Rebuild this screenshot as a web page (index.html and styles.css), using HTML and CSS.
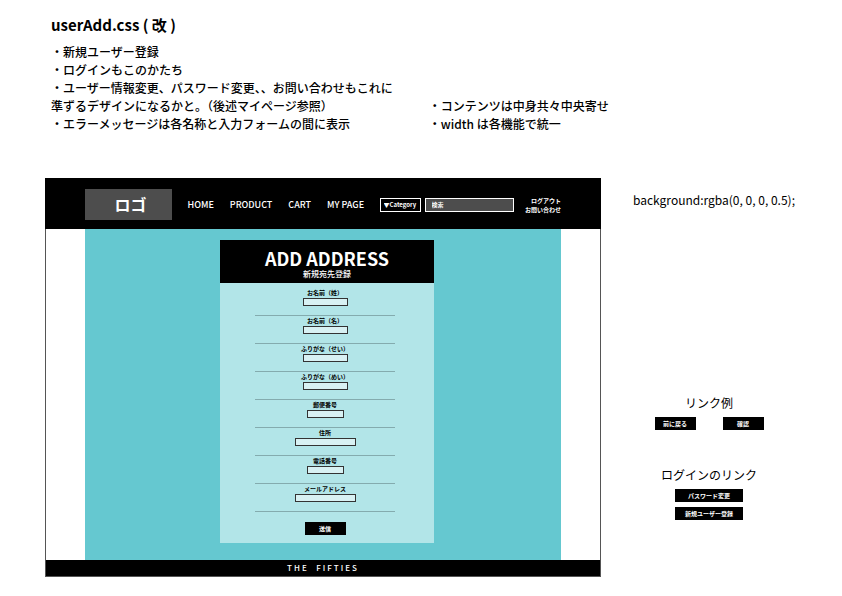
FILE: index.html
```html
<!DOCTYPE html>
<html lang="ja">
<head>
<meta charset="utf-8">
<title>userAdd.css</title>
<link rel="stylesheet" href="styles.css">
</head>
<body>
<section class="notes">
  <div class="notes-main">
    <h1>userAdd.css ( 改 )</h1>
    <p>・新規ユーザー登録<br>・ログインもこのかたち<br>・ユーザー情報変更、パスワード変更、、お問い合わせもこれに<br>準ずるデザインになるかと。（後述マイページ参照）<br>・エラーメッセージは各名称と入力フォームの間に表示</p>
  </div>
  <p>・コンテンツは中身共々中央寄せ<br>・width は各機能で統一</p>
</section>
<div class="board">
  <div class="frame">
    <header class="bar">
      <a class="logo" href="#">ロゴ</a>
      <nav class="nav">
        <a href="#">HOME</a>
        <a href="#">PRODUCT</a>
        <a href="#">CART</a>
        <a href="#">MY PAGE</a>
      </nav>
      <form class="search">
        <select aria-label="Category"><option>▼Category</option></select>
        <input type="search" aria-label="検索" placeholder="検索">
      </form>
      <div class="account">
        <a href="#">ログアウト</a>
        <a href="#">お問い合わせ</a>
      </div>
    </header>
    <main class="content">
      <form class="card">
        <div class="card-head">
          <h2>ADD ADDRESS</h2>
          <p>新規宛先登録</p>
        </div>
        <div class="fields">
          <div class="field"><label for="sei">お名前（姓）</label><input id="sei" type="text"></div>
          <div class="field"><label for="mei">お名前（名）</label><input id="mei" type="text"></div>
          <div class="field"><label for="ksei">ふりがな（せい）</label><input id="ksei" type="text"></div>
          <div class="field"><label for="kmei">ふりがな（めい）</label><input id="kmei" type="text"></div>
          <div class="field"><label for="zip">郵便番号</label><input class="short" id="zip" type="text"></div>
          <div class="field"><label for="addr">住所</label><input class="long" id="addr" type="text"></div>
          <div class="field"><label for="tel">電話番号</label><input class="short" id="tel" type="tel"></div>
          <div class="field"><label for="mail">メールアドレス</label><input class="long" id="mail" type="email"></div>
          <button class="btn" type="submit">送信</button>
        </div>
      </form>
    </main>
    <footer class="foot">THE&nbsp; FIFTIES</footer>
  </div>
  <aside class="side">
    <p>background:rgba(0, 0, 0, 0.5);</p>
    <section class="sample">
      <h3>リンク例</h3>
      <div class="pair">
        <a class="btn" href="#">前に戻る</a>
        <a class="btn" href="#">確認</a>
      </div>
    </section>
    <section class="sample">
      <h3>ログインのリンク</h3>
      <div class="stack">
        <a class="btn" href="#">パスワード変更</a>
        <a class="btn" href="#">新規ユーザー登録</a>
      </div>
    </section>
  </aside>
</div>
</body>
</html>
```
FILE: styles.css
```css
* {
  box-sizing: border-box;
}

body {
  margin: 0;
  background: #fff;
  color: #000;
  font: 12px/18px "Noto Sans CJK JP", sans-serif;
}

h1, h2, h3, p {
  margin: 0;
}

a {
  color: inherit;
  text-decoration: none;
}

input, select, button {
  margin: 0;
  border-radius: 0;
  font-family: inherit;
  appearance: none;
}

.notes {
  display: flex;
  align-items: flex-end;
  gap: 36px;
  padding: 15px 0 0 51px;
  font-weight: 500;
  white-space: nowrap;
}

h1 {
  margin-bottom: 8px;
  font-size: 15px;
  line-height: 20px;
}

.board {
  display: grid;
  grid-template-columns: 556fr 241fr;
  padding: 45px 0 19px 45px;
}

.frame {
  border: 1px solid #555;
  border-top: 0;
}

.bar {
  display: flex;
  align-items: center;
  justify-content: space-between;
  height: 51px;
  margin: 0 -1px;
  padding: 2px 40px 0;
  background: #000;
  color: #fff;
  white-space: nowrap;
}

.logo {
  width: 87px;
  background: #4d4d4d;
  font-size: 16px;
  font-weight: 700;
  line-height: 31px;
  text-align: center;
  text-indent: 4px;
}

.nav {
  display: flex;
  gap: 16px;
  padding: 0 4px;
  font-size: 9px;
  font-weight: 500;
}

.search {
  display: flex;
  align-items: center;
  gap: 4px;
}

.search select,
.search input {
  height: 14px;
  border: 1px solid #fff;
  background: #000;
  color: #fff;
  font-size: 6px;
  font-weight: 700;
  line-height: 12px;
}

.search select {
  width: 41px;
  padding: 0 3px;
}

.search input {
  width: 89px;
  padding: 0 6px;
  background: #4d4d4d;
}

.search input::placeholder {
  color: #fff;
}

.account {
  display: grid;
  font-size: 6px;
  font-weight: 700;
  line-height: 9px;
  text-align: right;
}

.content {
  margin: 0 39px;
  padding: 11px 0 17px 8px;
  background: #65c8d0;
}

.card {
  width: 214px;
  margin: 0 auto;
  padding-bottom: 8px;
  background: #b2e5e8;
}

.card-head {
  padding: 8px 0 3px;
  background: #000;
  color: #fff;
  font-size: 8px;
  font-weight: 500;
  line-height: 12px;
  text-align: center;
}

h2 {
  font-size: 18px;
  line-height: 20px;
}

.fields {
  display: flex;
  flex-direction: column;
  align-items: center;
  padding: 5px 4px 0 0;
}

.field {
  display: flex;
  flex-direction: column;
  align-items: center;
  width: 140px;
  height: 28px;
  border-bottom: 1px solid #84abae;
  font-size: 6px;
  font-weight: 700;
  line-height: 10px;
}

.field input {
  width: 45px;
  height: 8px;
  padding: 0 2px;
  border: 1px solid #333;
  background: #d8f1f3;
  font-size: 6px;
}

.field .short {
  width: 37px;
}

.field .long {
  width: 61px;
}

.btn {
  min-width: 41px;
  padding: 0;
  border: 0;
  background: #000;
  color: #fff;
  font-size: 6px;
  font-weight: 700;
  line-height: 13px;
  text-align: center;
}

.fields .btn {
  margin-top: 10px;
}

.foot {
  background: #000;
  color: #fff;
  font-size: 8px;
  font-weight: 500;
  letter-spacing: 2px;
  line-height: 16px;
  text-align: center;
}

.side {
  padding: 13px 20px 0 32px;
}

.side > p {
  margin-bottom: 185px;
  white-space: nowrap;
}

.sample {
  width: 152px;
  margin-bottom: 36px;
  text-align: center;
}

h3 {
  margin-bottom: 5px;
  font-size: 12px;
  font-weight: 400;
  line-height: 18px;
}

.pair {
  display: flex;
  justify-content: center;
  gap: 27px;
}

.stack {
  display: grid;
  grid-template-columns: 68px;
  justify-content: center;
  gap: 5px;
}
```
